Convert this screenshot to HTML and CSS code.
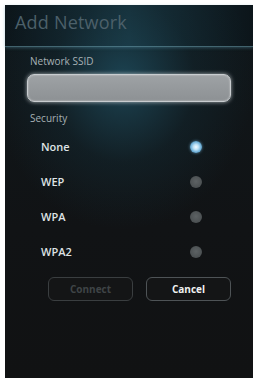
FILE: index.html
```html
<!DOCTYPE html>
<html>
<head>
<meta charset="utf-8">
<link rel="stylesheet" href="styles.css">
</head>
<body>
<div class="screen">
  <div class="titlebar"><span class="title">Add Network</span></div>
  <div class="content">
    <div class="label">Network SSID</div>
    <div class="input"></div>
    <div class="label security">Security</div>
    <div class="options">
      <div class="row"><span>None</span><span class="radio on"></span></div>
      <div class="row"><span>WEP</span><span class="radio"></span></div>
      <div class="row"><span>WPA</span><span class="radio"></span></div>
      <div class="row"><span>WPA2</span><span class="radio"></span></div>
    </div>
    <div class="buttons">
      <div class="btn disabled">Connect</div>
      <div class="btn">Cancel</div>
    </div>
  </div>
</div>
</body>
</html>
```
FILE: styles.css
```css
html, body { margin: 0; padding: 0; background: #fff; }
body { padding: 5px 0 0 5px; width: 248px; height: 373px; overflow: hidden; font-family: "Open Sans", "DejaVu Sans", sans-serif; }
.screen {
  width: 248px; height: 373px;
  background:
    radial-gradient(ellipse 130px 150px at 118px 75px, rgba(30,75,92,0.85), rgba(20,45,55,0.4) 55%, rgba(17,18,19,0) 100%),
    linear-gradient(#0f171b 0, #111315 60%, #111213 100%);
  display: flex; flex-direction: column;
}
.titlebar {
  height: 42px;
  display: flex; align-items: flex-start;
  padding-left: 10px;
  box-sizing: border-box;
  padding-top: 5px;
  background: linear-gradient(90deg, rgba(10,20,26,0.6), rgba(28,66,80,0.5) 50%, rgba(10,20,26,0.5));
  border-bottom: 1px solid rgba(110,160,175,0.55);
  box-shadow: 0 1px 3px rgba(90,150,170,0.4);
}
.title { color: #4c606a; font-size: 18px; letter-spacing: 0.2px; line-height: 24px; }
.content { padding: 0 22px 0 22px; display: flex; flex-direction: column; }
.label { color: #a7b1b5; font-size: 10px; margin-top: 7px; padding-left: 3px; line-height: 14px; }
.input {
  margin-top: 6px; height: 26px; border-radius: 7px;
  background: linear-gradient(#9ea2a5, #8d9194);
  box-shadow: 0 0 4px rgba(220,225,228,0.75), inset 0 0 2px rgba(240,240,240,0.6);
  border: 1px solid #c8cccf;
}
.security { margin-top: 9px; }
.options { display: flex; flex-direction: column; padding-left: 14px; padding-right: 29px; margin-top: 4px; }
.row { height: 35px; display: flex; align-items: center; justify-content: space-between; color: #dfe3e5; font-size: 11px; font-weight: 600; }
.radio { width: 12px; height: 12px; border-radius: 50%; background: radial-gradient(circle at 50% 45%, #5d6264, #43484a); }
.radio.on { background: radial-gradient(circle, #f4faff 0, #bfe2f6 30%, #6fb0d8 60%, #3a6f93 100%); box-shadow: 0 0 3px rgba(120,190,230,0.7); }
.buttons { display: flex; gap: 13px; padding-left: 21px; margin-top: 8px; }
.btn {
  width: 86px; height: 22px; border-radius: 6px;
  border: 1px solid #4e5356;
  background: #141516;
  display: flex; align-items: center; justify-content: center;
  color: #f0f0f0; font-size: 10px; font-weight: 700;
}
.btn.disabled { color: #3f4446; border-color: #3a3e40; }
```
